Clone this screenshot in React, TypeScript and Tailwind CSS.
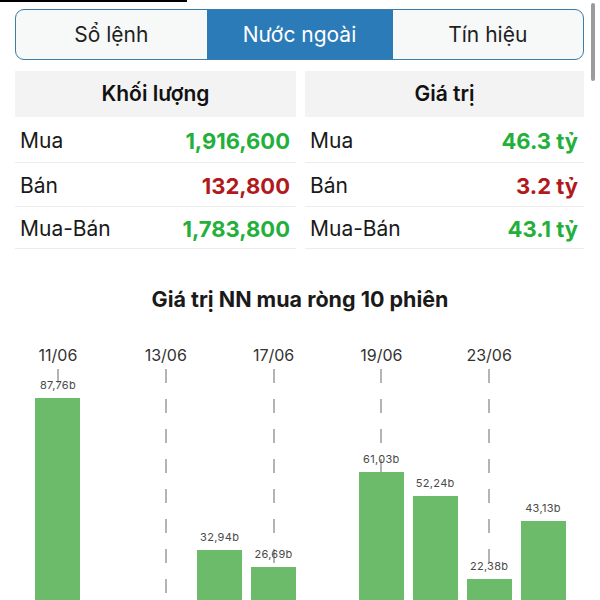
import React from "react";

type Session = {
  date: string;
  value: number;
  showDate: boolean;
};

const sessions: Session[] = [
  { date: "11/06", value: 87.76, showDate: true },
  { date: "12/06", value: -12.4, showDate: false },
  { date: "13/06", value: -5.1, showDate: true },
  { date: "16/06", value: 32.94, showDate: false },
  { date: "17/06", value: 26.69, showDate: true },
  { date: "18/06", value: -8.2, showDate: false },
  { date: "19/06", value: 61.03, showDate: true },
  { date: "20/06", value: 52.24, showDate: false },
  { date: "23/06", value: 22.38, showDate: true },
  { date: "24/06", value: 43.13, showDate: false },
];

const PX_PER_B = 2.773;

const tabs = ["Sổ lệnh", "Nước ngoài", "Tín hiệu"];

type Row = { label: string; value: string; up: boolean };

const volumeRows: Row[] = [
  { label: "Mua", value: "1,916,600", up: true },
  { label: "Bán", value: "132,800", up: false },
  { label: "Mua-Bán", value: "1,783,800", up: true },
];

const valueRows: Row[] = [
  { label: "Mua", value: "46.3 tỷ", up: true },
  { label: "Bán", value: "3.2 tỷ", up: false },
  { label: "Mua-Bán", value: "43.1 tỷ", up: true },
];

const rowHeights = ["h-[46px]", "h-[44px]", "h-[42px]"];

const fmt = (v: number) => v.toFixed(2).replace(".", ",") + "b";

const StatColumn = ({ title, rows }: { title: string; rows: Row[] }) => (
  <div className="flex flex-col">
    <div className="flex h-[46px] items-center justify-center bg-[#f3f3f3] text-[21px] font-semibold text-[#111]">
      {title}
    </div>
    {rows.map((r, i) => (
      <div
        key={r.label}
        className={
          "flex items-center justify-between border-b border-[#ececec] pl-[5px] pr-[6px] pt-[3px] text-[21px] " +
          rowHeights[i]
        }
      >
        <span className="text-[#1a1a1a]">{r.label}</span>
        <span
          className={
            "text-[22px] font-bold " +
            (r.up ? "text-[#23b03a]" : "text-[#b01a1d]")
          }
        >
          {r.value}
        </span>
      </div>
    ))}
  </div>
);

export default function App() {
  return (
    <div
      className="relative h-[600px] w-[600px] overflow-hidden bg-white"
      style={{ fontFamily: "Inter, 'Noto Sans', sans-serif" }}
    >
      <div className="h-[2px] w-[187px] bg-black" />

      {/* scroll indicator */}
      <div className="absolute left-[591px] top-[3px] h-[78px] w-[4px] rounded-full bg-[#9b9b9b]" />

      <div className="mx-[15px] mt-[7px] flex h-[51px] w-[569px] overflow-hidden rounded-[9px] border-[1.5px] border-[#3b7ca8] bg-[#f7f8f8]">
        {tabs.map((t, i) => (
          <div
            key={t}
            className={
              "flex items-center justify-center pt-[1px] text-[21px] " +
              (i === 1
                ? "w-[186px] bg-[#2b7bb8] text-white"
                : "flex-1 text-[#1f1f1f]")
            }
          >
            {t}
          </div>
        ))}
      </div>

      <div className="mx-[15px] mt-[11px] grid w-[569px] grid-cols-[281px_279px] gap-x-[9px]">
        <StatColumn title="Khối lượng" rows={volumeRows} />
        <StatColumn title="Giá trị" rows={valueRows} />
      </div>

      <div className="mt-[34px] text-center text-[21.5px] font-bold leading-[32px] text-[#1a1a1a]">
        Giá trị NN mua ròng 10 phiên
      </div>

      <div className="ml-[31px] mt-[26px] w-[539px]">
        <div className="grid h-[28px] grid-cols-10">
          {sessions.map((s) => (
            <div
              key={s.date}
              className="flex items-center justify-center text-[16px] text-[#333]"
            >
              {s.showDate ? s.date : ""}
            </div>
          ))}
        </div>
        <div className="grid h-[272px] grid-cols-10">
          {sessions.map((s) => (
            <div key={s.date} className="relative flex flex-col items-center justify-end">
              {s.showDate && (
                <svg
                  className="absolute left-1/2 top-0 -translate-x-1/2"
                  width="4"
                  height="272"
                >
                  <line
                    x1="2"
                    y1="0"
                    x2="2"
                    y2="272"
                    stroke="#9c9c9c"
                    strokeWidth="1.5"
                    strokeDasharray="14 16"
                  />
                </svg>
              )}
              {s.value > 0 && (
                <>
                  <span className="relative mb-[6px] text-[11px] leading-[14px] tracking-[0.3px] text-[#4a4a4a]">
                    {fmt(s.value)}
                  </span>
                  <div
                    className="relative w-[45px] bg-[#6cbb6a]"
                    style={{ height: s.value * PX_PER_B }}
                  />
                </>
              )}
            </div>
          ))}
        </div>
      </div>
    </div>
  );
}
